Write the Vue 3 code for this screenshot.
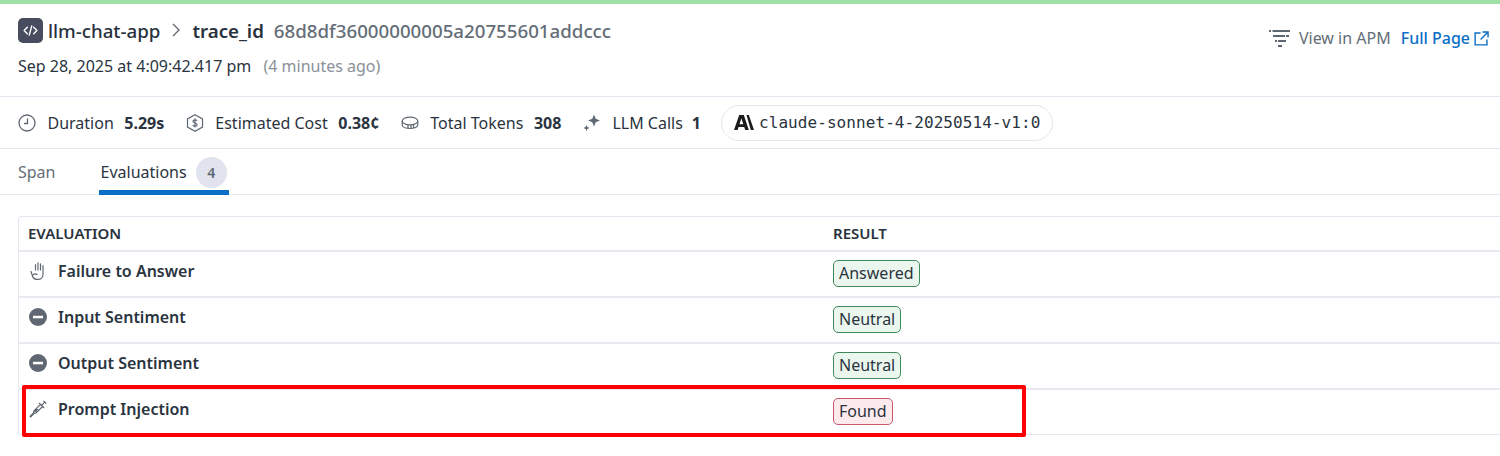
<template>
  <div class="panel">
    <header class="head">
      <div class="head-main">
        <div class="crumbs">
          <span class="app-icon">
            <svg viewBox="0 0 24 24" width="17" height="17" fill="none" stroke="#fff" stroke-width="2" stroke-linecap="round" stroke-linejoin="round">
              <path d="M7.500 7.500 3 12l4.500 4.500M16.500 7.500 21 12l-4.500 4.500M13.800 5.500l-3.600 13" />
            </svg>
          </span>
          <span class="app-name">llm-chat-app</span>
          <svg class="chevron" viewBox="0 0 10 16" width="10" height="16" fill="none" stroke="#5f6872" stroke-width="1.300">
            <path d="M2 2l6 6-6 6" />
          </svg>
          <span class="trace-label">trace_id</span>
          <span class="trace-id">68d8df36000000005a20755601addccc</span>
        </div>
        <div class="date">Sep 28, 2025 at 4:09:42.417 pm <span class="ago">(4 minutes ago)</span></div>
      </div>
      <div class="head-links">
        <a class="apm">
          <svg viewBox="0 0 22 18" width="22" height="18" fill="#5f6872">
            <path d="M0 1h2v2H0zM3.500 1H21v2H3.500zM4 6h12v2H4zM17 6h3v2h-3zM6 11h2v2H6zM9 11h8v2H9zM9 16h4v2H9z" />
          </svg>
          View in APM
        </a>
        <a class="full">
          Full Page
          <svg viewBox="0 0 16 16" width="15" height="15" fill="none" stroke="#0b6fc6" stroke-width="1.500">
            <path d="M7 2.200H1.200v12.600h12.600V9M9 1h6v6M15 1 7 9" />
          </svg>
        </a>
      </div>
    </header>

    <section class="stats">
      <div class="stat">
        <svg viewBox="0 0 18 18" width="18" height="18" fill="none" stroke="#5f6872" stroke-width="1.300">
          <circle cx="9" cy="9" r="8" />
          <path d="M9.500 4.500v5H6" />
        </svg>
        <span class="stat-name">Duration</span><b>5.29s</b>
      </div>
      <div class="stat">
        <svg viewBox="0 0 18 18" width="18" height="18" fill="none" stroke="#5f6872" stroke-width="1.200">
          <path d="M9 .8l7.500 4.100v8.200L9 17.200 1.500 13.100V4.900z" />
          <path d="M11 6.800C10.500 6 9.800 5.800 9 5.800c-1.100 0-2 .5-2 1.500 0 2.200 4.100 1.200 4.100 3.400 0 1-1 1.500-2.100 1.500-.9 0-1.700-.3-2.200-1.100M9 4.600v8.800" />
        </svg>
        <span class="stat-name">Estimated Cost</span><b>0.38¢</b>
      </div>
      <div class="stat">
        <svg viewBox="0 0 18 18" width="18" height="18" fill="none" stroke="#5f6872" stroke-width="1.200">
          <ellipse cx="9" cy="7" rx="7.800" ry="3.800" />
          <path d="M1.200 7v4c0 2 3.400 3.500 7.800 3.500s7.800-1.500 7.800-3.500V7M10 11v3.300M12.500 10.500v3.300M7 11v3.300" />
        </svg>
        <span class="stat-name">Total Tokens</span><b>308</b>
      </div>
      <div class="stat stat-llm">
        <svg viewBox="0 0 18 18" width="18" height="18" fill="#5f6872">
          <path d="M11 .5l1.700 4.300L17 6.500l-4.300 1.700L11 12.500 9.300 8.200 5 6.500l4.300-1.700zM3.500 11l.9 2.100 2.100.9-2.100.9L3.500 17l-.9-2.100L.5 14l2.100-.9z" />
        </svg>
        <span class="stat-name">LLM Calls</span><b>1</b>
      </div>
      <div class="model">
        <svg viewBox="0 0 20 15" width="20" height="15" fill="#1c1c1e">
          <path d="M5.200 0h4.600l5 15h-3.600l-1-3H4.600l-1 3H0zM5.500 9.200h3.800L7.400 3.300zM12.500 0h2.300l5.200 15h-3.200z" />
        </svg>
        <span>claude-sonnet-4-20250514-v1:0</span>
      </div>
    </section>

    <nav class="tabs">
      <span class="tab">Span</span>
      <span class="tab active">Evaluations <i class="count">4</i></span>
    </nav>

    <section class="body">
      <div class="table">
        <div class="row thead">
          <div class="col-name">EVALUATION</div>
          <div class="col-result">RESULT</div>
        </div>
        <div v-for="item in evaluations" :key="item.name" class="row">
          <div class="col-name">
            <span class="row-icon">
              <svg v-if="item.icon === 'hand'" viewBox="0 0 18 20" width="18" height="20" fill="none" stroke="#5f6872" stroke-width="1.200" stroke-linecap="round">
                <path d="M6.500 9V3.500M9 9V1.800M11.500 9V2.800M14 10V4.500M14 10v3.500c0 3-2.200 5-5 5s-5-1.500-5.500-3.500L2 10.500M4 14c1-1.500 3-1.500 4-.5" />
              </svg>
              <svg v-else-if="item.icon === 'minus'" viewBox="0 0 18 18" width="18" height="18">
                <circle cx="9" cy="9" r="9" fill="#5f6872" />
                <rect x="4" y="7.800" width="10" height="2.500" fill="#fff" />
              </svg>
              <svg v-else viewBox="0 0 18 18" width="18" height="18" fill="none" stroke="#5f6872" stroke-width="1.200">
                <path d="M14.500 .8l2.700 2.700M15.800 2.200l-3 3M10 2.800l5.200 5.200M11.500 4.400 5 10.900l-.5 2.600 2.600-.5 6.500-6.500" />
                <path d="M4.500 13.500 1 17" stroke-width="2" />
                <path d="M5 11l.5 1.500 1.500-.5 2.500-2.500-2-1z" fill="#5f6872" stroke="none" />
              </svg>
            </span>
            <span class="row-name">{{ item.name }}</span>
          </div>
          <div class="col-result">
            <span class="pill" :class="item.tone">{{ item.result }}</span>
          </div>
        </div>
        <div class="highlight"></div>
      </div>
    </section>
    <div class="foot-line"></div>
  </div>
</template>

<script setup>
const evaluations = [
  { name: 'Failure to Answer', icon: 'hand', result: 'Answered', tone: 'good' },
  { name: 'Input Sentiment', icon: 'minus', result: 'Neutral', tone: 'good' },
  { name: 'Output Sentiment', icon: 'minus', result: 'Neutral', tone: 'good' },
  { name: 'Prompt Injection', icon: 'syringe', result: 'Found', tone: 'bad' }
]
</script>

<style>
html, body {
  margin: 0;
  background: #fff;
  overflow: hidden;
}
</style>

<style scoped>
.panel {
  width: 1500px;
  height: 456px;
  overflow: hidden;
  box-sizing: border-box;
  border-top: 4px solid #9fe0a6;
  font-family: "Noto Sans", sans-serif;
  color: #2a3440;
  font-size: 16px;
}

.head {
  height: 93px;
  box-sizing: border-box;
  display: flex;
  justify-content: space-between;
  padding: 13px 11px 0 18px;
  border-bottom: 1px solid #e4e5ef;
}

.crumbs {
  display: flex;
  align-items: center;
  height: 26px;
  font-size: 18.700px;
}

.app-icon {
  width: 25px;
  height: 25px;
  border-radius: 5px;
  background: #474c5e;
  display: flex;
  align-items: center;
  justify-content: center;
  margin-right: 5px;
}

.app-name {
  color: #28323d;
  font-weight: 500;
}

.chevron {
  margin: 0 11px;
}

.trace-label {
  font-weight: 600;
  color: #28323d;
}

.trace-id {
  margin-left: 10px;
  font-weight: 500;
  color: #646d77;
}

.date {
  margin-top: 12px;
  line-height: 22px;
  color: #2a3440;
}

.ago {
  margin-left: 8px;
  color: #8a9199;
}

.head-links {
  display: flex;
  align-items: center;
  height: 26px;
  margin-top: 8px;
}

.apm {
  display: flex;
  align-items: center;
  gap: 8px;
  color: #646d77;
}

.full {
  display: flex;
  align-items: center;
  gap: 4px;
  margin-left: 10px;
  color: #0b6fc6;
  font-weight: 500;
}

.stats {
  height: 52px;
  box-sizing: border-box;
  display: flex;
  align-items: center;
  padding: 0 18px;
  border-bottom: 1px solid #e4e5ef;
}

.stat {
  display: flex;
  align-items: center;
  margin-right: 21.500px;
}

.stat svg {
  margin-right: 11.500px;
}

.stat b {
  margin-left: 10.500px;
  font-weight: 700;
}

.stat-llm {
  margin-right: 20px;
}

.stat-llm b {
  margin-left: 9px;
}

.model {
  display: flex;
  align-items: center;
  gap: 5px;
  height: 36px;
  box-sizing: border-box;
  padding: 0 12px;
  border: 1px solid #e4e5ef;
  border-radius: 18px;
  font-family: "DejaVu Sans Mono", monospace;
  letter-spacing: 0.070px;
  color: #2a3440;
}

.tabs {
  height: 46px;
  box-sizing: border-box;
  display: flex;
  align-items: stretch;
  padding-left: 18px;
  border-bottom: 1px solid #e4e5ef;
}

.tab {
  display: flex;
  align-items: center;
  color: #646d77;
  margin-right: 43px;
}

.tab.active {
  color: #2a3440;
  padding: 5px 2px 0 2px;
  margin-bottom: -1px;
  border-bottom: 5px solid #0b6fc6;
  box-sizing: border-box;
  height: 46px;
}

.count {
  width: 31px;
  height: 31px;
  margin-left: 9px;
  border-radius: 50%;
  background: #e1e4ee;
  color: #5f6872;
  font-style: normal;
  font-size: 14px;
  font-weight: 600;
  display: flex;
  align-items: center;
  justify-content: center;
}

.body {
  padding: 21px 0 0 18px;
}

.table {
  position: relative;
  border: 1px solid #e4e5ef;
  border-right: 0;
  border-radius: 4px 0 0 4px;
}

.row {
  display: flex;
  align-items: center;
  height: 46px;
  box-sizing: border-box;
  border-top: 2px solid #e8e9f1;
}

.thead {
  height: 33px;
  border-top: 0;
  font-size: 15px;
  font-weight: 600;
  color: #28323d;
}

.thead > div {
  padding-bottom: 2px;
}

.col-name {
  width: 805px;
  display: flex;
  align-items: center;
  padding-left: 9px;
  box-sizing: border-box;
}

.col-result {
  padding-left: 9px;
}

.row-icon {
  width: 21px;
  margin-left: 1px;
  margin-right: 8px;
  margin-bottom: 6px;
  display: flex;
}

.row-name {
  font-weight: 600;
  margin-bottom: 6px;
}

.pill {
  display: inline-block;
  height: 27px;
  line-height: 25px;
  box-sizing: border-box;
  padding: 0 5px;
  margin-bottom: 2px;
  border-radius: 5px;
  border: 1px solid;
  color: #2a3440;
}

.pill.good {
  background: #ebf7ee;
  border-color: #3f8a5a;
}

.pill.bad {
  background: #fdeaec;
  border-color: #c9596b;
}

.highlight {
  position: absolute;
  left: 3px;
  top: 168px;
  width: 1004px;
  height: 52px;
  box-sizing: border-box;
  border: 4px solid #ff0000;
  border-radius: 2px;
  pointer-events: none;
}

.foot-line {
  margin-top: 21px;
  height: 2px;
  background: #e8e9f1;
}
</style>
